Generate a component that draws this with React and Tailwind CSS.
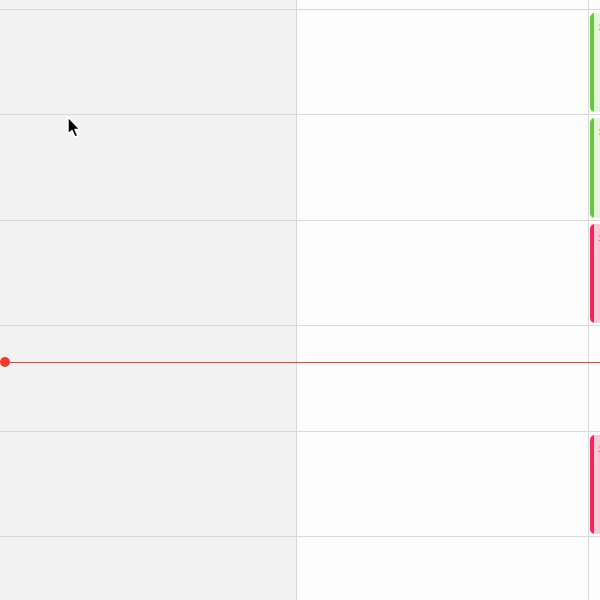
const rows = [
  { event: { bar: "bg-[#66c83c]", fill: "bg-[#e3f5da]", text: "text-[#7aa86a]", label: "10:00" } },
  { event: { bar: "bg-[#66c83c]", fill: "bg-[#e3f5da]", text: "text-[#7aa86a]", label: "11:00" } },
  { event: { bar: "bg-[#f2265a]", fill: "bg-[#fcc9d7]", text: "text-[#b0667a]", label: "12:00" } },
  { event: null },
  { event: { bar: "bg-[#f2265a]", fill: "bg-[#fcc9d7]", text: "text-[#b0667a]", label: "14:00" } },
  { event: null },
];

export default function App() {
  return (
    <div className="relative w-[600px] h-[600px] overflow-hidden bg-[#fefdfe] font-['Liberation_Sans',sans-serif]">
      {/* Top partial row */}
      <Row height="h-[10px]" />

      {rows.map((r, i) => (
        <Row key={i} height="h-[105.4px]" event={r.event} />
      ))}

      {/* Current time indicator */}
      <div className="absolute left-0 right-0 top-[357px] flex items-center">
        <span className="w-[10px] h-[10px] rounded-full bg-[#f03b30] flex-shrink-0" />
        <span className="flex-1 h-px bg-[#f03b30]" />
      </div>

      {/* Mouse cursor */}
      <svg
        className="absolute left-[66px] top-[116px]"
        width="16"
        height="24"
        viewBox="0 0 16 24"
      >
        <path
          d="M2 1 L2 18 L6 14.5 L9 21 L11.8 19.8 L9 13.5 L14 13.5 Z"
          fill="#000"
          stroke="#fff"
          strokeWidth="1.4"
          strokeLinejoin="round"
        />
      </svg>
    </div>
  );
}

function Row({ height, event }) {
  return (
    <div className={`flex ${height} border-b border-[#d9d9db] box-border`}>
      <div className="w-[297px] bg-[#f2f2f3] border-r border-[#d9d9db]" />
      <div className="w-[292px] border-r border-[#d9d9db]" />
      <div className="flex-1 min-w-0 pt-[3px] pb-[2px] pl-px overflow-hidden">
        {event && (
          <div className={`h-full flex rounded-l-[5px] overflow-hidden ${event.fill}`}>
            <span className={`w-[4px] h-full flex-shrink-0 ${event.bar}`} />
            <span className={`pl-[4px] pt-[10px] text-[9px] leading-none whitespace-nowrap ${event.text}`}>
              {event.label}
            </span>
          </div>
        )}
      </div>
    </div>
  );
}
